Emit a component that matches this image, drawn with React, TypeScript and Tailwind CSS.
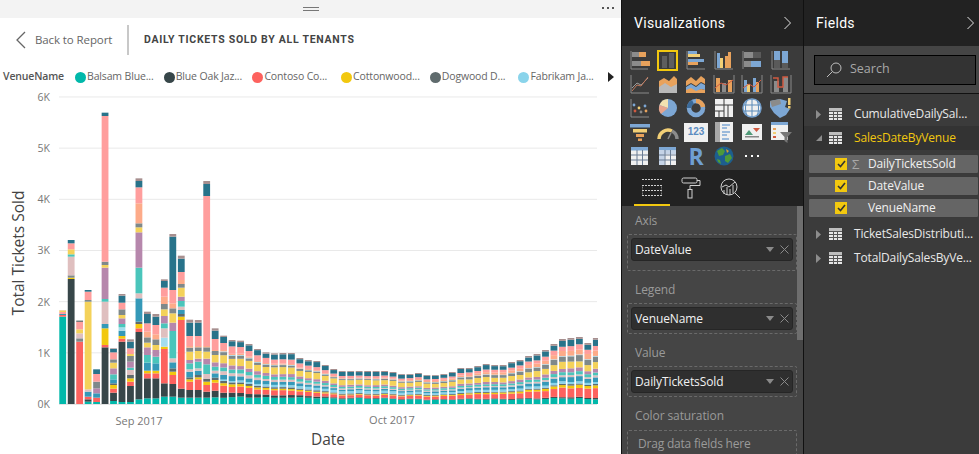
import React from "react";

const C: Record<string, string> = {
  t: "#01B8AA", d: "#374649", r: "#FD625E", y: "#F2C80F", g: "#5F6B6D", l: "#8AD4EB",
  b: "#3599B8", k: "#DFBFBF", T: "#4AC5BB", p: "#B687AC", Y: "#F4D25A", G: "#7F898A",
  L: "#A4DDEE", O: "#FDAB89", R: "#FF9E9D", B: "#28738A", M: "#A78F8F",
};

// First bars: colour key + top of the segment, read off the reference (3x scale, 912 = zero)
const early = [
  "t650 r645 b642 R636 Y631 k630",
  "d537 y533 G526 k470 T463 Y448 R430 B420",
  "r725 G715 k700 Y688 R665 d662",
  "t905 d898 r890 b875 k868 Y605 G600 R575 B570",
  "t906 r893 b880 p865 G845 R822 B808",
  "d742 r735 y685 b672 k605 T597 p503 Y495 G485 R48 B38",
  "t903 d878 r866 y855 g850 b838 T823 p805 Y788 G778 R757 B747 M745",
  "t906 d725 r716 y708 b692 L682 T672 p655 Y645 G628 R608 B587 M582",
  "t906 d858 r845 y835 g825 k810 T803 p785 G768 Y762 R745 B725 M718",
  "t898 d696 r685 y672 g665 b595 k580 T503 p397 Y382 G370 O310 R262 B243 M235",
  "t895 d835 r820 y812 b788 T765 p742 Y728 G712 O695 R670 B642 M635",
  "t895 d835 r820 y812 b790 T770 p750 Y735 G718 O703 R675 B650 M642",
  "t890 d850 r747 y740 L713 k685 T670 p648 Y628 G612 O590 R563 B543 M538",
  "t890 d852 r825 y815 g805 b787 k775 T693 p668 Y640 G625 O610 R570 B410 M402",
  "t893 d866 r660 y650 g642 b630 k620 T603 p590 Y563 G552 O540 R516 B476 M467",
  "t893 d870 r845 y838 g832 b815 k808 T790 p780 Y755 G743 O738 R708 B668 M659",
  "t893 d870 r838 y832 g825 b812 k805 T785 p776 Y753 G742 O738 R708 B668 M660",
  "t893 d875 r855 y845 g836 k822 T793 p776 Y755 G742 O738 R288 B252 M243",
  "t892 d872 r848 y840 g833 b820 k812 T800 p787 Y765 G753 O750 R717 B692 M685",
];
const earlyTops = [707, 720, 722, 732, 747, 757, 760];
const lateTops = [353, 353, 358, 360, 361, 365, 369, 371, 371, 371, 371, 371, 371, 372, 374, 374, 373, 375, 375, 374, 372, 368, 368, 366, 364, 365, 365, 362, 360, 356, 354, 350, 344, 339, 338, 337, 343, 338, 344];

const order = ["t", "d", "r", "y", "g", "l", "b", "k", "T", "p", "Y", "G", "L", "O", "R", "B", "M"];
const pEarly = [.10, .07, .10, .04, .03, .02, .07, .05, .06, .06, .11, .05, .01, .02, .11, .08, .02];
const pMid = [.17, .02, .08, .02, .03, .08, .05, .03, .05, .05, .15, .03, .01, .02, .06, .12, .03];
const pLate = [.08, .02, .16, .05, .02, .03, .08, .03, .05, .06, .10, .10, .01, .09, .08, .09, .03];

type Seg = { c: string; y: number; h: number };
function parse(s: string): Seg[] {
  let prev = 404;
  return s.split(" ").map((tok) => {
    const top = 100 + Number(tok.slice(1)) / 3;
    const seg = { c: C[tok[0]], y: top, h: prev - top };
    prev = top;
    return seg;
  });
}
function profile(i: number, total: number): Seg[] {
  const u = (i - 19) / 44;
  const a = u < 0.35 ? pEarly : pMid;
  const b = u < 0.35 ? pMid : pLate;
  const v = u < 0.35 ? u / 0.35 : (u - 0.35) / 0.65;
  const w = order.map((_, k) => (a[k] + (b[k] - a[k]) * v) * (1 + 0.1 * Math.sin(i * 1.9 + k * 2.3)));
  const sum = w.reduce((x, y) => x + y, 0);
  let prev = 404;
  return order.map((key, k) => {
    const h = (w[k] / sum) * total;
    const seg = { c: C[key], y: prev - h, h };
    prev -= h;
    return seg;
  });
}
const bars: Seg[][] = [];
early.forEach((s) => bars.push(parse(s)));
earlyTops.forEach((t, n) => bars.push(profile(19 + n, 404 - (100 + t / 3))));
lateTops.forEach((t, n) => bars.push(profile(25 + n, 404 - t)));

function Chart() {
  const font = '"Open Sans","Noto Sans",sans-serif';
  return (
    <svg width={621} height={367} viewBox="0 87 621 367" className="block" style={{ fontFamily: font }}>
      {[0, 1, 2, 3, 4, 5, 6].map((n) => {
        const y = 404 - n * 51.17;
        return (
          <g key={n}>
            <line x1={59} x2={597} y1={y} y2={y} stroke="#e9e9e9" strokeWidth={1} />
            <text x={50} y={y + 4} textAnchor="end" fontSize={10.5} fill="#777">{n === 0 ? "0K" : `${n}K`}</text>
          </g>
        );
      })}
      {bars.map((segs, i) => {
        const x = 59.3 + i * 8.47;
        const w = Math.min(6.8, 598 - x);
        return (
          <g key={i}>
            {segs.map((s, j) => (
              <rect key={j} x={x} y={s.y} width={w} height={Math.max(s.h, 0.4)} fill={s.c} />
            ))}
          </g>
        );
      })}
      <line x1={59} x2={597} y1={404.5} y2={404.5} stroke="#e4e4e4" />
      <text x={139} y={425} textAnchor="middle" fontSize={11} fill="#777">Sep 2017</text>
      <text x={392} y={424} textAnchor="middle" fontSize={11} fill="#777">Oct 2017</text>
      <text x={328} y={445} textAnchor="middle" fontSize={15.5} fill="#444">Date</text>
      <text transform="translate(24 253) rotate(-90)" textAnchor="middle" fontSize={15.5} fill="#444">Total Tickets Sold</text>
    </svg>
  );
}

const legend = [
  ["#01B8AA", "Balsam Blue..."], ["#374649", "Blue Oak Jaz..."], ["#FD625E", "Contoso Co..."],
  ["#F2C80F", "Cottonwood..."], ["#5F6B6D", "Dogwood D..."], ["#8AD4EB", "Fabrikam Ja..."],
];

const ax = "#8a8a8a", or = "#e8a25c", bl = "#7da7d4", ye = "#f2cf76", gr = "#8b8b8b", dk = "#5a5a5a", wh = "#f0f0f0";
const Ic = ({ children }: { children?: React.ReactNode }) => (
  <svg width={24} height={22} viewBox="0 0 24 22" className="block">{children}</svg>
);
const Grid = ({ alt }: { alt?: boolean }) => (
  <g>
    <rect x={3} y={2} width={17} height={18} fill={wh} />
    <rect x={3} y={2} width={17} height={3.5} fill={bl} />
    {alt && <rect x={3} y={5} width={5.5} height={15} fill="#c5d3e6" />}
    {alt && <rect x={3} y={5.5} width={17} height={3.5} fill="#c5d3e6" />}
    {[8.5, 14].map((x) => <rect key={x} x={x} y={5} width={1} height={15} fill="#6a7d94" />)}
    {[9.5, 14.5].map((y) => <rect key={y} x={3} y={y} width={17} height={1} fill="#6a7d94" />)}
  </g>
);
const icons: React.ReactNode[] = [
  <Ic><path d="M3 2v18h17" stroke={ax} fill="none" /><rect x={4} y={3} width={7} height={5} fill={gr} /><rect x={11} y={3} width={7} height={5} fill={or} /><rect x={13} y={12} width={9} height={5} fill={or} /><rect x={4} y={12} width={9} height={5} fill={gr} /></Ic>,
  <div className="flex h-[21px] w-[21px] items-end justify-center gap-[2px] border-2 border-[#f2c80f] bg-[#3b3b3b] pb-[1px]"><div className="h-[12px] w-[5px] bg-[#5e5e5e]" /><div className="h-[15px] w-[5px] bg-[#5e5e5e]" /></div>,
  <Ic><path d="M3 2v18h18" stroke={ax} fill="none" /><rect x={4} y={2} width={9} height={3} fill={bl} /><rect x={4} y={5} width={12} height={3} fill={ye} /><rect x={4} y={10} width={16} height={3} fill={bl} /><rect x={4} y={13} width={10} height={3} fill={or} /></Ic>,
  <Ic><path d="M3 2v18h18" stroke={ax} fill="none" /><rect x={5} y={4} width={3} height={15} fill={bl} /><rect x={8} y={9} width={3} height={10} fill={ye} /><rect x={13} y={7} width={3} height={12} fill={or} /><rect x={16} y={3} width={3} height={16} fill={or} /></Ic>,
  <Ic><path d="M3 2v18" stroke={ax} fill="none" /><rect x={4} y={3} width={9} height={6} fill={gr} /><rect x={13} y={3} width={8} height={6} fill={dk} /><rect x={4} y={12} width={7} height={6} fill={gr} /><rect x={11} y={12} width={10} height={6} fill={bl} /></Ic>,
  <Ic><path d="M3 2v18h18" stroke={ax} fill="none" /><rect x={5} y={2} width={6} height={9} fill={bl} /><rect x={5} y={11} width={6} height={8} fill={dk} /><rect x={13} y={2} width={6} height={12} fill={bl} /><rect x={13} y={14} width={6} height={5} fill={dk} /></Ic>,
  <Ic><path d="M3 2v18h18" stroke={ax} fill="none" /><path d="M4 15l5-5 4 2 7-7" stroke="#9c9c9c" fill="none" /><path d="M4 18l5-6 4 1 7-9" stroke="#c0785a" fill="none" /></Ic>,
  <Ic><path d="M3 8l5-3 5 3 5-5 3 3v14H3z" fill={or} /><path d="M3 14l6-4 6 4 6-3v9H3z" fill="#b9b9b9" /></Ic>,
  <Ic><path d="M2 8l5-4 5 4 5-5 4 3v5l-4-2-5 4-5-3-5 3z" fill={or} /><path d="M2 14l5-3 5 3 5-4 4 2v5l-4-1-5 3-5-3-5 2z" fill={bl} /><path d="M2 17l5-2 5 3 5-2 4 1v3H2z" fill={or} /></Ic>,
  <Ic><path d="M2 2v18h20V2" stroke={ax} fill="none" /><rect x={4} y={5} width={4} height={14} fill={or} /><rect x={10} y={10} width={4} height={9} fill={gr} /><rect x={16} y={7} width={4} height={12} fill={or} /><path d="M3 15l6-5 5 2 7-5" stroke="#d05a40" fill="none" /></Ic>,
  <Ic><path d="M2 2v18h20V2" stroke={ax} fill="none" /><rect x={4} y={7} width={3} height={12} fill={bl} /><rect x={7} y={11} width={3} height={8} fill={ye} /><rect x={13} y={5} width={3} height={14} fill={bl} /><rect x={16} y={9} width={3} height={10} fill={or} /><path d="M3 15l6-4 5 3 7-7" stroke="#d05a40" fill="none" /></Ic>,
  <Ic><path d="M2 2v18h20V2" stroke={ax} fill="none" /><rect x={5} y={8} width={5} height={11} fill={gr} /><rect x={14} y={4} width={5} height={15} fill={gr} /><path d="M4 5h5v9h5V4h5" stroke="#d05a40" strokeWidth={1.5} fill="none" /></Ic>,
  <Ic><path d="M3 2v18h18" stroke={ax} fill="none" /><circle cx={7} cy={14} r={1.4} fill="#d05a40" /><circle cx={6} cy={8} r={1.4} fill={bl} /><circle cx={11} cy={11} r={1.4} fill={ye} /><circle cx={13} cy={15} r={1.4} fill={gr} /><circle cx={17} cy={9} r={1.4} fill={bl} /><circle cx={18} cy={14} r={1.4} fill={or} /></Ic>,
  <Ic><circle cx={12} cy={11} r={9} fill={bl} /><path d="M12 11L3.5 8A9 9 0 0 1 12 2z" fill="#f2e2b0" /><path d="M12 11L5 17A9 9 0 0 1 3.5 8z" fill="#e8a58c" /></Ic>,
  <Ic><circle cx={12} cy={11} r={7} fill="none" stroke={bl} strokeWidth={4.5} /><path d="M12 4a7 7 0 0 1 7 6" fill="none" stroke={or} strokeWidth={4.5} /><path d="M5 11a7 7 0 0 1 4-6" fill="none" stroke="#3b6a99" strokeWidth={4.5} /></Ic>,
  <Ic><rect x={3} y={2} width={18} height={18} fill={wh} /><path d="M3 8h18M3 14h9M12 2v18M16 8v12M7 14v6" stroke="#3b3b3b" /></Ic>,
  <Ic><circle cx={12} cy={11} r={9} fill={wh} stroke={bl} strokeWidth={1.5} /><path d="M3 8h18M3 14h18M12 2v18M7 3c-2 5-2 11 0 16M17 3c2 5 2 11 0 16" stroke="#5a8ab8" fill="none" /></Ic>,
  <Ic><path d="M1 4l10-2 7 2-2 6 5 2-4 6-6 3-6-5-4-6z" fill={bl} /><path d="M1 4l10-2 1 5-9 3z" fill={gr} /><rect x={19} y={1} width={2.5} height={7} fill={ye} /><rect x={19} y={9} width={2.5} height={2.5} fill={ye} /></Ic>,
  <Ic><rect x={2} y={3} width={20} height={3.5} fill={bl} /><rect x={5} y={8} width={14} height={3.5} fill={ye} /><rect x={8} y={13} width={8} height={3} fill={or} /><rect x={10} y={17.5} width={4} height={2.5} fill={or} /></Ic>,
  <Ic><path d="M3 18a9 9 0 0 1 13-8" fill="none" stroke={ye} strokeWidth={3.5} /><path d="M16 10a9 9 0 0 1 5 8" fill="none" stroke={gr} strokeWidth={3.5} /><path d="M12 18l3-6" stroke={gr} strokeWidth={1.5} /></Ic>,
  <div className="flex h-[19px] w-[24px] items-center justify-center bg-[#f0f0f0] text-[10px] font-bold leading-none text-[#5b8cc0] [font-family:'Liberation_Sans',sans-serif]">123</div>,
  <Ic><rect x={3} y={1} width={18} height={20} fill={wh} /><rect x={3} y={1} width={5} height={20} fill="#a8a8a8" /><path d="M10 4h8M10 7h5M10 11h8M10 14h5M10 18h7" stroke={bl} strokeWidth={1.4} /></Ic>,
  <Ic><rect x={2} y={3} width={20} height={16} fill={wh} /><path d="M5 14l4-5 4 5z" fill="#4f9a78" /><path d="M13 7h7l-3.5 4z" fill="#d05a40" /><rect x={5} y={15} width={14} height={1.5} fill="#888" /></Ic>,
  <Ic><rect x={2} y={1} width={17} height={18} fill={wh} /><rect x={2} y={1} width={17} height={3} fill={bl} /><rect x={4} y={7} width={3} height={2} fill={or} /><rect x={4} y={11} width={3} height={2} fill={ye} /><rect x={4} y={15} width={3} height={2} fill="#d05a40" /><path d="M11 11h12l-4.5 5v6l-3-2v-4z" fill="#777" /></Ic>,
  <Ic><Grid /></Ic>,
  <Ic><Grid alt /></Ic>,
  <span className="text-[23px] font-bold leading-none text-[#6f9fd2] [font-family:'Open_Sans',sans-serif]">R</span>,
  <Ic><circle cx={12} cy={11} r={9.5} fill="#1d5e8e" /><path d="M5 6l5-3 3 3-2 4-4 1zM13 11l5-2 2 4-4 5-3-2zM5 14l3 1 1 4-3-2z" fill="#4d9a3a" /><path d="M14 4l3 2-2 2z" fill="#d9a02e" /></Ic>,
  <span className="flex items-center gap-[4px]"><i className="h-[2px] w-[2px] bg-white" /><i className="h-[2px] w-[2px] bg-white" /><i className="h-[2px] w-[2px] bg-white" /></span>,
];

const Chevron = ({ color = "#e4e4e4" }: { color?: string }) => (
  <svg width={9} height={14} viewBox="0 0 9 14"><path d="M1.5 1l6 6-6 6" fill="none" stroke={color} strokeWidth={1} /></svg>
);

function Well({ label, value, cls, boxCls }: { label: string; value: string; cls: string; boxCls?: string }) {
  return (
    <div className={cls}>
      <div className="pl-[13px] text-[12px] leading-[16px] tracking-[-0.1px] text-[#9a9a9a]">{label}</div>
      <div className={`mx-[5px] mt-[5px] w-[170px] rounded-[2px] border border-dashed border-[#6a6a6a] p-[3px] ${boxCls ?? ""}`}>
        <div className="flex h-[23px] items-center justify-between rounded-[3px] border border-[#262626] bg-[#2f2f2f] pl-[3px] pr-[3px] text-[12px] tracking-[-0.1px] text-[#f2f2f2]">
          <span>{value}</span>
          <span className="flex items-center gap-[6px]">
            <svg width={8} height={5} viewBox="0 0 8 5"><path d="M0 0h8L4 5z" fill="#8a8a8a" /></svg>
            <svg width={9} height={9} viewBox="0 0 9 9"><path d="M.5.5l8 8M8.5.5l-8 8" stroke="#8a8a8a" /></svg>
          </span>
        </div>
      </div>
    </div>
  );
}

const TableIcon = () => (
  <svg width={13} height={12} viewBox="0 0 13 12" className="shrink-0">
    <rect width={13} height={12} fill="#e6e6e6" />
    <rect width={13} height={3} fill="#bdbdbd" />
    <path d="M0 3.5h13M0 6.5h13M0 9.5h13M4.5 3v9M8.5 3v9" stroke="#555" strokeWidth={1} />
  </svg>
);
const Tri = () => <svg width={5} height={9} viewBox="0 0 5 9" className="shrink-0"><path d="M0 0l5 4.5L0 9z" fill="#8d8d8d" /></svg>;

function TableRow({ label, active, open }: { label: string; active?: boolean; open?: boolean }) {
  return (
    <div className={`flex h-[24px] items-center pl-[12px] text-[12px] tracking-[-0.15px] ${active ? "bg-[#333333] text-[#f2c80f]" : "text-[#e8e8e8]"}`}>
      <span className="flex w-[13px] shrink-0">
        {open ? <svg width={6} height={6} viewBox="0 0 6 6"><path d="M6 0v6H0z" fill="#8d8d8d" /></svg> : <Tri />}
      </span>
      <TableIcon />
      <span className="ml-[12px] whitespace-nowrap">{label}</span>
    </div>
  );
}
function FieldRow({ label, sigma }: { label: string; sigma?: boolean }) {
  return (
    <div className="ml-[4px] flex h-[20px] items-center rounded-[2px] border border-[#3a3a3a] bg-[#656565] text-[12px] tracking-[-0.15px] text-[#f0f0f0]">
      <span className="ml-[26px] flex h-[12px] w-[12px] items-center justify-center bg-[#f2c80f]">
        <svg width={9} height={8} viewBox="0 0 9 8"><path d="M1 4l2.5 2.5L8 1" fill="none" stroke="#333" strokeWidth={1.6} /></svg>
      </span>
      <span className="ml-[5px] w-[10px] text-[13px] leading-none text-[#a8a8a8]">{sigma ? "Σ" : ""}</span>
      <span className="ml-[6px]">{label}</span>
    </div>
  );
}

export default function App() {
  return (
    <div className="flex h-[454px] w-[979px] overflow-hidden bg-white [font-family:'Open_Sans','Noto_Sans',sans-serif]">
      <main className="flex w-[621px] shrink-0 flex-col overflow-hidden">
        <div className="relative flex h-[18px] shrink-0 items-center justify-center bg-[#f3f3f3]">
          <span className="flex flex-col gap-[2px]"><i className="block h-px w-[16px] bg-[#777]" /><i className="block h-px w-[16px] bg-[#777]" /></span>
          <span className="absolute right-[7px] top-[7px] flex gap-[3px]"><i className="h-[2px] w-[2px] bg-[#555]" /><i className="h-[2px] w-[2px] bg-[#555]" /><i className="h-[2px] w-[2px] bg-[#555]" /></span>
        </div>
        <div className="mt-[7px] flex h-[30px] shrink-0 items-center">
          <svg width={12} height={20} viewBox="0 0 12 20" className="ml-[15px]"><path d="M10 2l-8 8 8 8" fill="none" stroke="#666" strokeWidth={1.3} /></svg>
          <span className="ml-[8px] w-[77px] whitespace-nowrap text-[11.5px] tracking-[-0.1px] text-[#666]">Back to Report</span>
          <span className="ml-[15px] h-[30px] w-[2px] bg-[#c8c8c8]" />
          <span className="ml-[15px] text-[10.5px] font-bold tracking-[0.72px] text-[#444] [font-family:Roboto,sans-serif]">DAILY TICKETS SOLD BY ALL TENANTS</span>
        </div>
        <div className="mt-[12px] flex h-[20px] shrink-0 items-center pl-[3px] text-[10.5px] tracking-[-0.15px] text-[#666]">
          <span className="w-[72px] font-semibold text-[#555]">VenueName</span>
          {legend.map(([c, t]) => (
            <span key={t} className="flex w-[88.7px] items-center whitespace-nowrap">
              <span className="mr-[1px] h-[11px] w-[11px] shrink-0 rounded-full" style={{ background: c }} />
              {t}
            </span>
          ))}
          <svg width={6} height={10} viewBox="0 0 6 10" className="ml-[1px]"><path d="M0 0l6 5-6 5z" fill="#222" /></svg>
        </div>
        <Chart />
      </main>

      <section className="flex w-[183px] shrink-0 flex-col overflow-hidden border-l border-r border-[#111] bg-[#454545] text-white">
        <div className="flex h-[46px] shrink-0 items-center justify-between bg-[#222222] pl-[12px] pr-[11px]">
          <span className="text-[14px] tracking-[0.3px] [font-family:Roboto,sans-serif]">Visualizations</span>
          <Chevron />
        </div>
        <div className="grid h-[124px] shrink-0 grid-cols-[repeat(6,28.2px)] grid-rows-[repeat(5,24px)] content-center bg-[#3b3b3b] pl-[3.5px]">
          {icons.map((ic, i) => (
            <div key={i} className="flex items-center justify-center">{ic}</div>
          ))}
        </div>
        <div className="flex h-[36px] shrink-0 bg-[#222222] pl-[12px]">
          <div className="flex w-[36px] items-center justify-center border-b-2 border-[#f2c80f]">
            <svg width={20} height={20} viewBox="0 0 20 20" fill="none" stroke="#d0d0d0" strokeDasharray="2 1"><path d="M0 2.5h20M0 8.5h20v10H0zM0 13.5h20" /></svg>
          </div>
          <div className="flex w-[42px] items-center justify-center">
            <svg width={20} height={22} viewBox="0 0 20 22" fill="none" stroke="#d0d0d0"><rect x={1} y={1} width={15} height={5} rx={1.5} /><path d="M16 3.5h3v5H9v4" /><rect x={7} y={12.5} width={4} height={8.5} /></svg>
          </div>
          <div className="flex w-[36px] items-center justify-center">
            <svg width={22} height={22} viewBox="0 0 22 22" fill="none" stroke="#d0d0d0"><circle cx={10} cy={10} r={8} /><path d="M16 16l5 5M5 13v4M8 10v8M11 12v6M14 8v8M3 10l4-2 3 2 6-5" /></svg>
          </div>
        </div>
        <div className="relative min-h-0 flex-1">
          <span className="absolute right-0 top-0 h-[134px] w-[6px] bg-[#6e6e6e]" />
          <Well label="Axis" value="DateValue" cls="pt-[7px]" boxCls="pb-[9px]" />
          <Well label="Legend" value="VenueName" cls="mt-[11px]" />
          <Well label="Value" value="DailyTicketsSold" cls="mt-[11px]" />
          <div className="mt-[11px] pl-[13px] text-[12px] leading-[16px] tracking-[-0.1px] text-[#9a9a9a]">Color saturation</div>
          <div className="mx-[5px] mt-[6px] h-[40px] w-[170px] rounded-[2px] border border-dashed border-[#6a6a6a] pl-[10px] pt-[4px] text-[12px] tracking-[-0.2px] text-[#9a9a9a]">Drag data fields here</div>
        </div>
      </section>

      <section className="flex min-w-0 flex-1 flex-col bg-[#3b3b3b] text-white">
        <div className="flex h-[46px] shrink-0 items-center justify-between bg-[#222222] pl-[12px] pr-[4px]">
          <span className="text-[14px] tracking-[0.3px] [font-family:Roboto,sans-serif]">Fields</span>
          <Chevron />
        </div>
        <div className="flex h-[48px] shrink-0 items-center border-b border-[#111] bg-[#454545] pl-[10px]">
          <div className="flex h-[30px] w-[162px] items-center gap-[8px] border border-black bg-[#333333] pl-[11px] text-[12.5px] text-[#a8a8a8]">
            <svg width={16} height={16} viewBox="0 0 16 16" fill="none" stroke="#bdbdbd"><circle cx={10} cy={6} r={5} /><path d="M6.5 9.5L1 15" /></svg>
            Search
          </div>
        </div>
        <div className="pt-[8px]">
          <TableRow label="CumulativeDailySal..." />
          <TableRow label="SalesDateByVenue" active open />
          <div className="mt-[4px] flex flex-col gap-[2px]">
            <FieldRow label="DailyTicketsSold" sigma />
            <FieldRow label="DateValue" />
            <FieldRow label="VenueName" />
          </div>
          <div className="mt-[4px]"><TableRow label="TicketSalesDistributi..." /></div>
          <TableRow label="TotalDailySalesByVe..." />
        </div>
      </section>
    </div>
  );
}
